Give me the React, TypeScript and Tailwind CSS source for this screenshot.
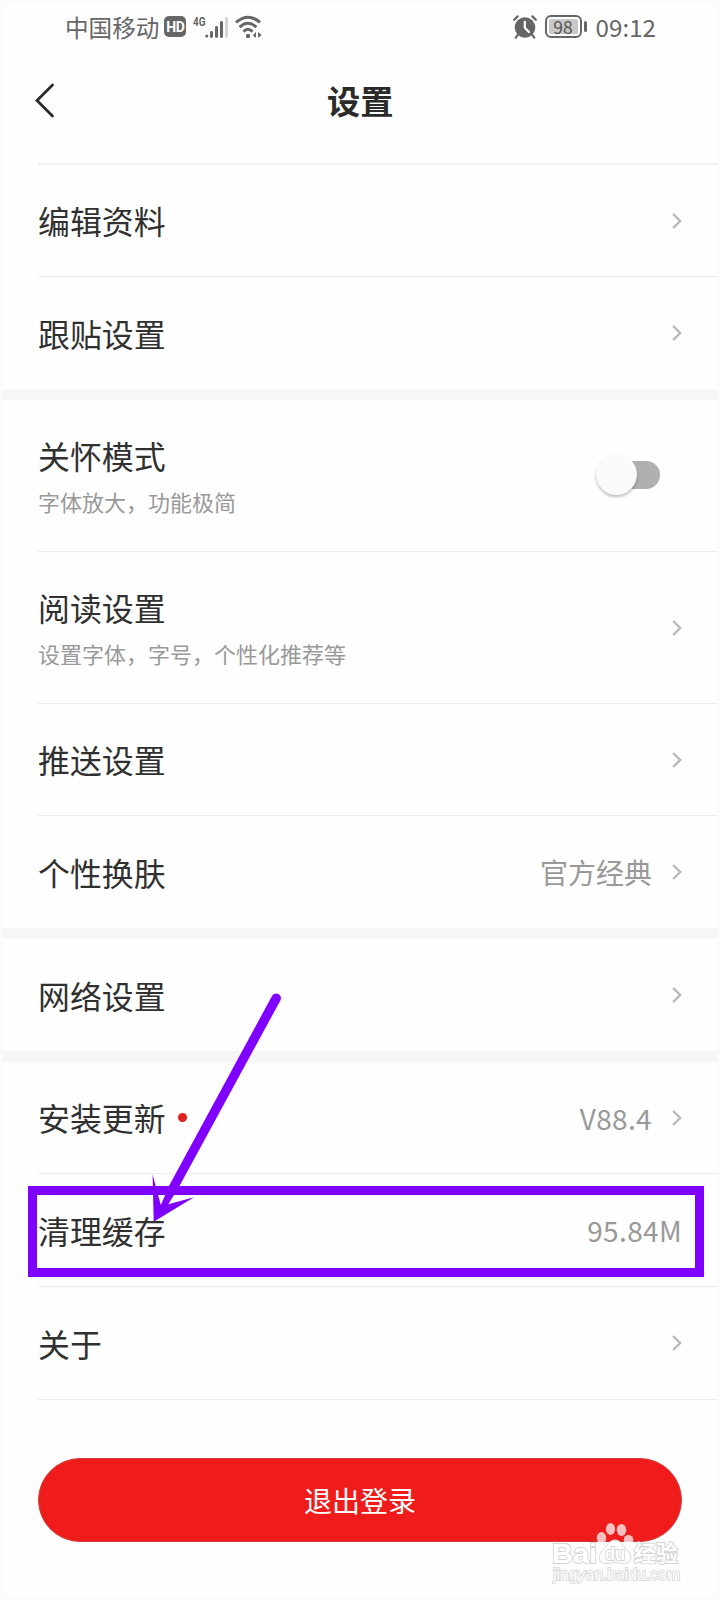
import type { ReactNode } from "react";

function Chevron() {
  return (
    <svg width="10" height="16" viewBox="0 0 10 16" fill="none" stroke="#b9b9b9" strokeWidth="2.4" className="block shrink-0">
      <path d="M1.1 1 L8.2 8 L1.1 15" />
    </svg>
  );
}

type RowProps = {
  title: string;
  sub?: string;
  value?: string;
  dot?: boolean;
  chevron?: boolean;
  line?: boolean;
  size: string;
  control?: ReactNode;
};

function Row({ title, sub, value, dot, chevron = true, line = true, size, control }: RowProps) {
  return (
    <div className={`ml-[36px] flex items-center justify-between pr-[36px] ${size} ${line ? "border-b border-[#ebebeb]" : ""}`}>
      <div className={`flex flex-col ${sub ? "pb-[2px]" : "pb-px"}`}>
        <div className="flex items-center text-[31.9px] leading-[44px] text-[#303030]">
          {title}
          {dot && <span className="ml-[12px] size-[9px] rounded-full bg-[#e02020]" />}
        </div>
        {sub && <div className="mt-[8px] text-[22px] leading-[32px] text-[#999]">{sub}</div>}
      </div>
      <div className="flex items-center">
        {value && (
          <span className={`text-[28px] leading-[40px] text-[#999] ${dot || !chevron ? "tracking-[0.35px]" : ""} ${chevron ? "mr-[20px]" : ""}`}>
            {value}
          </span>
        )}
        {control}
        {chevron && <Chevron />}
      </div>
    </div>
  );
}

function Toggle() {
  return (
    <div className="relative mb-px mr-[22px] flex h-[42px] w-[64px] items-center justify-end">
      <div className="h-[28px] w-[46px] rounded-full bg-[#b0b0b0]" />
      <div className="absolute left-0 top-0 size-[41px] rounded-full bg-[#fafafa] shadow-[0_2px_3px_rgba(0,0,0,0.25)]" />
    </div>
  );
}

function Band() {
  return <div className="h-[11px] bg-[#f6f6f7]" />;
}

function StatusBar() {
  return (
    <div className="flex h-[49px] items-center pl-[63px] pr-[62px] text-[#666]">
      <span className="text-[23.6px] leading-[36px]">中国移动</span>
      <span className="ml-[5px] flex h-[21px] w-[22px] items-center justify-center rounded-[5px] bg-[#666] font-['Roboto',sans-serif] text-[14px] font-bold leading-[18px] tracking-[-0.3px] text-white">
        HD
      </span>
      <svg width="16" height="28" viewBox="0 0 16 28" className="ml-[6px] block shrink-0" fill="#666">
        <text x="1" y="13" fontSize="13" fontWeight="700" fontFamily="Roboto, sans-serif" textLength="12.5" lengthAdjust="spacingAndGlyphs">
          4G
        </text>
      </svg>
      <svg width="24" height="24" viewBox="0 0 24 24" className="-ml-[3px] block shrink-0">
        <g fill="#666">
          <circle cx="1.8" cy="21" r="1.6" />
          <rect x="5" y="16" width="3" height="7" rx="1.4" />
          <rect x="10" y="11" width="3" height="12" rx="1.4" />
          <rect x="15" y="6" width="3" height="17" rx="1.4" />
          <rect x="20" y="2" width="3" height="21" rx="1.4" fill="#d6d6d6" />
        </g>
      </svg>
      <svg width="28" height="24" viewBox="0 0 28 24" fill="none" stroke="#666" strokeWidth="3" className="ml-[6px] block shrink-0">
        <path d="M1 7.4 Q13 -3 25 7.4" />
        <path d="M4.6 12.2 Q13 4.4 21.4 12.2" />
        <path d="M8.4 16.6 Q13 12 17.6 16.6" />
        <circle cx="13" cy="21" r="2.2" fill="#666" stroke="none" />
        <path d="M21 17 V23 L17.8 20.2 Z M23 17 V23 L26.6 20 Z" fill="#666" stroke="none" />
      </svg>
      <div className="grow" />
      <svg width="24" height="24" viewBox="0 0 24 24" className="block shrink-0">
        <circle cx="12" cy="12.5" r="10.3" fill="#666" />
        <path d="M4.8 19.8 L2.8 22.6 M19.2 19.8 L21.2 22.6" stroke="#666" strokeWidth="2.2" strokeLinecap="round" />
        <path d="M0.5 7 L6.5 1 M23.5 7 L17.5 1" stroke="#fefefe" strokeWidth="2" />
        <path d="M1.2 4.8 L4.6 1.4 M22.8 4.8 L19.4 1.4" stroke="#666" strokeWidth="2.2" strokeLinecap="round" />
        <path d="M11.8 6.8 V12.8 L16 17" fill="none" stroke="#fff" strokeWidth="2.2" strokeLinecap="round" strokeLinejoin="round" />
      </svg>
      <span className="ml-[8px] flex h-[23px] w-[37px] items-center justify-center rounded-[6px] border-2 border-[#666] p-[2px]">
        <span className="flex h-[15px] w-[29px] items-center justify-center rounded-[2px] bg-[#c8c8c8] text-[17.5px] leading-[15px] text-[#555]">98</span>
      </span>
      <span className="ml-[2px] h-[11px] w-[3px] rounded-sm bg-[#666]" />
      <span className="ml-[9px] text-[24.2px] leading-[36px]">09:12</span>
    </div>
  );
}

function Watermark() {
  return (
    <svg width="140" height="70" viewBox="0 0 140 70" className="absolute left-[546px] top-[1517px]">
      <g fill="#fff" fillOpacity="0.72">
        <ellipse cx="53.5" cy="19" rx="4.8" ry="6" />
        <ellipse cx="62.5" cy="10" rx="4.6" ry="6" />
        <ellipse cx="73.5" cy="11" rx="4.8" ry="6" />
        <ellipse cx="80.5" cy="21" rx="4.8" ry="5.2" />
      </g>
      <path
        d="M67 21 C73 21 74 27 79 31 C85 36 84 44 76 44.5 C71 44.5 70 43.5 67 43.5 C64 43.5 62 44.5 57 44.5 C50 44 50 36 55 31 C60 27 61 21 67 21 Z"
        fill="#fff"
        stroke="#d8d8d8"
        strokeWidth="1"
      />
      <g fill="#fff" stroke="#d4d4d4" strokeWidth="1.8" paintOrder="stroke" fontFamily="'Liberation Sans', sans-serif">
        <text x="4" y="43.5" fontSize="28" fontWeight="700" textLength="45" lengthAdjust="spacingAndGlyphs">Bai</text>
        <text x="57" y="41" fontSize="18" fontWeight="700" textLength="20" lengthAdjust="spacingAndGlyphs">du</text>
        <text x="86" y="42" fontSize="22" fontWeight="700" textLength="44" fontFamily="'Noto Sans CJK SC', sans-serif">经验</text>
        <text x="5" y="61" fontSize="16" strokeWidth="1.6" textLength="127" lengthAdjust="spacingAndGlyphs">jingyan.baidu.com</text>
      </g>
    </svg>
  );
}

export default function App() {
  return (
    <div className="relative h-[1600px] w-[720px] overflow-hidden border-2 border-[#fbfbfb] bg-[#fefefe] font-['Noto_Sans_CJK_SC',sans-serif]">
      <StatusBar />
      <header className="flex h-[112px] items-center">
        <svg width="20" height="36" viewBox="0 0 20 36" fill="none" stroke="#2b2b2b" strokeWidth="2.8" strokeLinecap="round" className="mb-[12px] ml-[33px] block">
          <path d="M17.5 2 L2 17.5 L17.5 33" />
        </svg>
        <h1 className="mb-[14px] ml-[272px] text-[33.3px] font-bold leading-[48px] text-[#2b2b2b]">设置</h1>
      </header>
      <div className="ml-[36px] h-[2px] bg-[#f1f1f1]" />
      <Row size="h-[112px]" title="编辑资料" />
      <Row size="h-[112px]" title="跟贴设置" line={false} />
      <Band />
      <Row size="h-[152px]" title="关怀模式" sub="字体放大，功能极简" chevron={false} control={<Toggle />} />
      <Row size="h-[152px]" title="阅读设置" sub="设置字体，字号，个性化推荐等" />
      <Row size="h-[112px]" title="推送设置" />
      <Row size="h-[112px]" title="个性换肤" value="官方经典" line={false} />
      <Band />
      <Row size="h-[112px]" title="网络设置" line={false} />
      <Band />
      <Row size="h-[112px]" title="安装更新" value="V88.4" dot />
      <Row size="h-[113px]" title="清理缓存" value="95.84M" chevron={false} />
      <Row size="h-[113px]" title="关于" />
      <button className="ml-[36px] mt-[58px] flex h-[84px] w-[644px] items-center justify-center rounded-full border border-[#cf3b3b] bg-[#ef1c1b] text-[28px] leading-[40px] text-white">
        退出登录
      </button>

      <div className="absolute left-[26px] top-[1184px] h-[91px] w-[676px] border-9 border-[#8000ff]" />
      <svg width="136" height="234" viewBox="148 992 136 234" className="absolute left-[146px] top-[990px]" fill="#8000ff">
        <path d="M272 996 A4.7 4.7 0 0 1 280.4 1000.4 L180 1185 L168.3 1204.3 L194 1197.3 L153.7 1221.7 L152.6 1174.5 L160.8 1205 L169.5 1185 Z" />
      </svg>
      <Watermark />
    </div>
  );
}
